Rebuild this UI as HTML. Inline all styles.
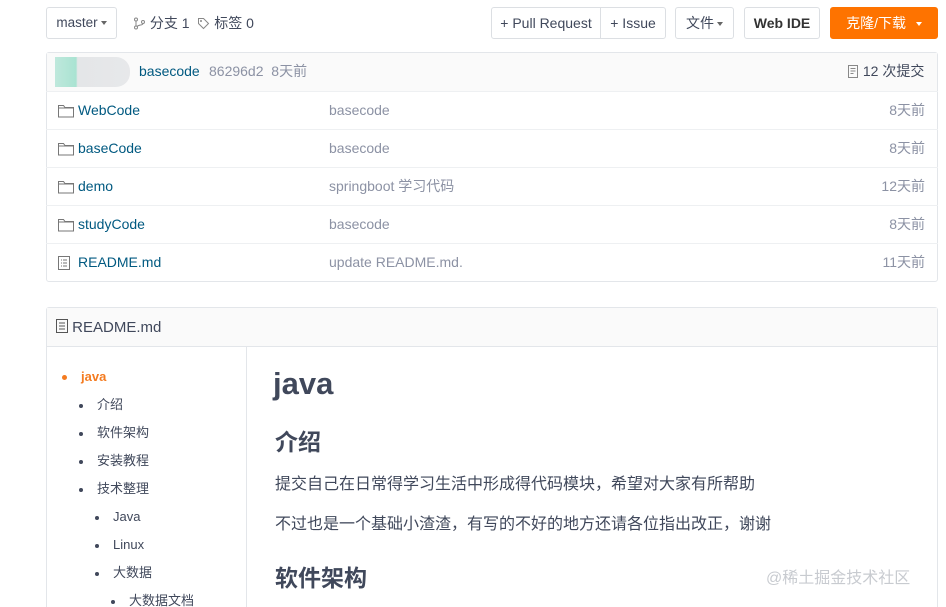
<!DOCTYPE html>
<html><head><meta charset="utf-8"><style>
*{box-sizing:border-box;margin:0;padding:0}
html,body{width:946px;height:607px;overflow:hidden}
body{background:#fff;font-family:"Liberation Sans","Noto Sans CJK SC",sans-serif;font-size:13.5px;color:#40485b;position:relative}
.a{position:absolute;white-space:nowrap;line-height:18px}
.btn{position:absolute;border:1px solid #dcdfe3;border-radius:3px;background:#fff;height:32px;line-height:30px;font-size:13.5px;color:#40485b;text-align:center}
.caret{display:inline-block;width:0;height:0;border-left:3.5px solid transparent;border-right:3.5px solid transparent;border-top:4px solid #666;vertical-align:middle;margin-left:3px}
.row{position:absolute;left:46px;width:892px;height:38px;border-top:1px solid #eef0f2;line-height:37px;font-size:14px}
.row .n{position:absolute;left:32px;color:#005980}
.row .m{position:absolute;left:283px;color:#8c92a4}
.row .t{position:absolute;right:13px;color:#8c92a4}
.row svg{position:absolute;left:12px;top:12px}
.toc{position:absolute;font-size:13px;color:#40485b;line-height:18px;white-space:nowrap}
.dot{position:absolute;width:4px;height:4px;border-radius:50%;background:#40485b}
</style></head><body>
<div class="btn" style="left:46px;top:7px;width:71px">master<span class="caret"></span></div>
<div class="a" style="left:133px;top:14px;font-size:14px"><svg width="13" height="13" viewBox="0 0 13 13" style="vertical-align:-2px"><g fill="none" stroke="#888" stroke-width="1"><circle cx="3" cy="2.5" r="1.5"/><circle cx="3" cy="10.5" r="1.5"/><circle cx="10" cy="5" r="1.5"/><path d="M3 4v5M10 6.5c0 2-4 1-6 3"/></g></svg> 分支 1 &nbsp;<svg width="13" height="13" viewBox="0 0 13 13" style="vertical-align:-2px"><path d="M1.5 1.5h5l5 5-5 5-5-5z" fill="none" stroke="#888"/><circle cx="4" cy="4" r="1" fill="#888"/></svg> 标签 0</div>
<div class="btn" style="left:491px;top:7px;width:175px;padding:0;font-size:14px"><span style="position:absolute;left:0;width:109px;border-right:1px solid #dcdfe3">+ Pull Request</span><span style="position:absolute;left:109px;width:64px">+ Issue</span></div>
<div class="btn" style="left:675px;top:7px;width:59px;font-size:14px">文件<span class="caret"></span></div>
<div class="btn" style="left:744px;top:7px;width:76px;font-weight:bold;color:#333;font-size:14px">Web IDE</div>
<div class="btn" style="left:830px;top:7px;width:108px;background:#fe7300;border-color:#fe7300;color:#fff;font-size:14px">克隆/下载 <span class="caret" style="border-top-color:#fff;margin-left:6px"></span></div>

<div class="a" style="left:46px;top:52px;width:892px;height:230px;border:1px solid #e3e6ea;border-radius:3px"></div>
<div class="a" style="left:47px;top:53px;width:890px;height:38px;background:#fafafa"></div>
<div class="a" style="left:55px;top:57px;width:75px;height:30px;border-radius:0 14px 14px 0;background:linear-gradient(90deg,#bfe8dc 0,#a9e3d2 28%,#e4e6e8 30%,#e7e8ea 100%)"></div>
<div class="a" style="left:139px;top:62px;color:#005980;font-size:14px">basecode</div>
<div class="a" style="left:209px;top:62px;color:#8c92a4;font-size:14px">86296d2 &nbsp;8天前</div>
<div class="a" style="left:847px;top:62px;font-size:14px"><svg width="12" height="13" viewBox="0 0 12 13" style="vertical-align:-2px"><path d="M1.5 .5h9v12h-9zM3.5 3.5h5M3.5 6h5M3.5 8.5h3" fill="none" stroke="#888"/></svg> 12 次提交</div>

<div class="row" style="top:91px"><svg width="16" height="14" viewBox="0 0 16 14"><path d="M.5 1.5h5l1.5 2h8.5v9.5H.5z M.5 4h15" fill="none" stroke="#777"/></svg><span class="n">WebCode</span><span class="m">basecode</span><span class="t">8天前</span></div>
<div class="row" style="top:129px"><svg width="16" height="14" viewBox="0 0 16 14"><path d="M.5 1.5h5l1.5 2h8.5v9.5H.5z M.5 4h15" fill="none" stroke="#777"/></svg><span class="n">baseCode</span><span class="m">basecode</span><span class="t">8天前</span></div>
<div class="row" style="top:167px"><svg width="16" height="14" viewBox="0 0 16 14"><path d="M.5 1.5h5l1.5 2h8.5v9.5H.5z M.5 4h15" fill="none" stroke="#777"/></svg><span class="n">demo</span><span class="m">springboot 学习代码</span><span class="t">12天前</span></div>
<div class="row" style="top:205px"><svg width="16" height="14" viewBox="0 0 16 14"><path d="M.5 1.5h5l1.5 2h8.5v9.5H.5z M.5 4h15" fill="none" stroke="#777"/></svg><span class="n">studyCode</span><span class="m">basecode</span><span class="t">8天前</span></div>
<div class="row" style="top:243px"><svg width="12" height="14" viewBox="0 0 12 14"><path d="M.5 .5h11v13H.5zM3 4h1M5 4h4M3 7h1M5 7h4M3 10h1M5 10h4" fill="none" stroke="#777"/></svg><span class="n">README.md</span><span class="m">update README.md.</span><span class="t">11天前</span></div>

<div class="a" style="left:46px;top:307px;width:892px;height:310px;border:1px solid #e3e6ea;border-radius:3px"></div>
<div class="a" style="left:47px;top:308px;width:890px;height:39px;background:#fafafa;border-bottom:1px solid #e3e6ea"></div>
<div class="a" style="left:56px;top:319px;font-size:15px"><svg width="12" height="14" viewBox="0 0 12 14" style="vertical-align:-1px"><path d="M.5 .5h11v13H.5zM3 4h6M3 7h6M3 10h6" fill="none" stroke="#555"/></svg> README.md</div>
<div class="a" style="left:246px;top:347px;width:1px;height:260px;background:#e3e6ea"></div>

<div class="toc" style="left:81px;top:368px;color:#f47b20;font-weight:bold">java</div>
<div class="dot" style="left:62px;top:375px;width:5px;height:5px;background:#f47b20"></div>
<div class="dot" style="left:79px;top:404px"></div><div class="toc" style="left:97px;top:396px">介绍</div>
<div class="dot" style="left:79px;top:432px"></div><div class="toc" style="left:97px;top:424px">软件架构</div>
<div class="dot" style="left:79px;top:460px"></div><div class="toc" style="left:97px;top:452px">安装教程</div>
<div class="dot" style="left:79px;top:488px"></div><div class="toc" style="left:97px;top:480px">技术整理</div>
<div class="dot" style="left:95px;top:516px"></div><div class="toc" style="left:113px;top:508px">Java</div>
<div class="dot" style="left:95px;top:544px"></div><div class="toc" style="left:113px;top:536px">Linux</div>
<div class="dot" style="left:95px;top:572px"></div><div class="toc" style="left:113px;top:564px">大数据</div>
<div class="dot" style="left:111px;top:600px"></div><div class="toc" style="left:129px;top:592px">大数据文档</div>

<div class="a" style="left:273px;top:365px;font-size:31px;line-height:38px;font-weight:bold">java</div>
<div class="a" style="left:275px;top:427px;font-size:23px;line-height:30px;font-weight:bold">介绍</div>
<div class="a" style="left:275px;top:474px;font-size:16px;line-height:22px">提交自己在日常得学习生活中形成得代码模块，希望对大家有所帮助</div>
<div class="a" style="left:275px;top:514px;font-size:16px;line-height:22px">不过也是一个基础小渣渣，有写的不好的地方还请各位指出改正，谢谢</div>
<div class="a" style="left:275px;top:563px;font-size:23px;line-height:30px;font-weight:bold">软件架构</div>
<div class="a" style="left:766px;top:568px;font-size:16px;line-height:22px;color:#c8cbd0">@稀土掘金技术社区</div>
</body></html>
